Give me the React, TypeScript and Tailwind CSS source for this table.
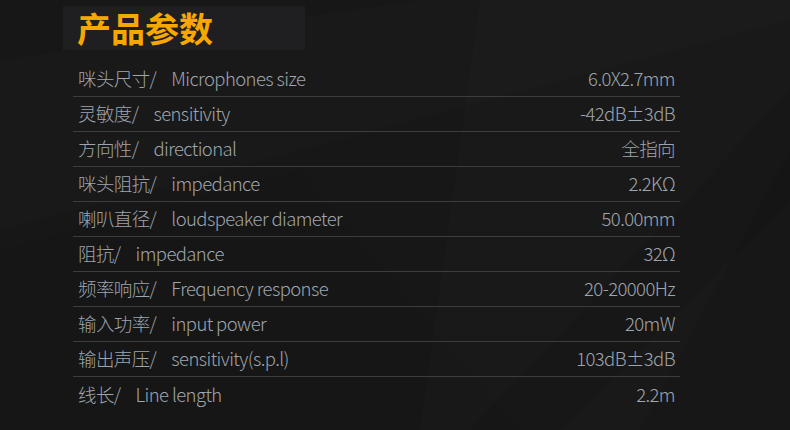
import React from 'react';

const specs = [
    { cn: '咪头尺寸', en: 'Microphones size', value: '6.0X2.7mm' },
    { cn: '灵敏度', en: 'sensitivity', value: '-42dB±3dB' },
    { cn: '方向性', en: 'directional', value: '全指向' },
    { cn: '咪头阻抗', en: 'impedance', value: '2.2KΩ' },
    { cn: '喇叭直径', en: 'loudspeaker diameter', value: '50.00mm' },
    { cn: '阻抗', en: 'impedance', value: '32Ω' },
    { cn: '频率响应', en: 'Frequency response', value: '20-20000Hz' },
    { cn: '输入功率', en: 'input power', value: '20mW' },
    { cn: '输出声压', en: 'sensitivity(s.p.l)', value: '103dB±3dB' },
    { cn: '线长', en: 'Line length', value: '2.2m' },
];

function Backdrop() {
    return (
        <svg
            className="absolute inset-0 h-full w-full"
            viewBox="0 0 790 430"
            preserveAspectRatio="none"
        >
            <polygon points="0,60 420,0 790,0 790,20 0,230" fill="#ffffff" fillOpacity="0.01" />
            <polygon points="480,0 790,0 790,150 640,430 420,430" fill="#ffffff" fillOpacity="0.012" />
            <polygon points="790,90 790,200 560,430 470,430" fill="#000000" fillOpacity="0.06" />
            <polygon points="0,250 300,170 520,430 0,430" fill="#000000" fillOpacity="0.04" />
        </svg>
    );
}

export default function App() {
    return (
        <div
            className="relative h-[430px] w-[790px] overflow-hidden bg-[#171717]"
            style={{ fontFamily: '"Noto Sans CJK SC", "Noto Sans", sans-serif' }}
        >
            <Backdrop />

            <div className="relative pt-[6px]">
                <div className="ml-[63px] flex h-[44px] w-[242px] items-center bg-[#1f1f21] pl-[14px]">
                    <h1 className="text-[34px] leading-none font-bold text-[#f7a800]">
                        产品参数
                    </h1>
                </div>

                <div className="mt-[12px] ml-[73px] w-[607px]">
                    {specs.map((row, i) => (
                        <div
                            key={i}
                            className={
                                'flex h-[35px] items-center justify-between px-[5px] text-[18.5px] font-light tracking-[-0.6px] text-[#9fa5ad] ' +
                                (i < specs.length - 1 ? 'border-b border-[#3d3d3d]' : '')
                            }
                        >
                            <div className="flex items-center">
                                <span>{row.cn}/</span>
                                <span className="ml-[15px]">{row.en}</span>
                            </div>
                            <span>{row.value}</span>
                        </div>
                    ))}
                </div>
            </div>
        </div>
    );
}
